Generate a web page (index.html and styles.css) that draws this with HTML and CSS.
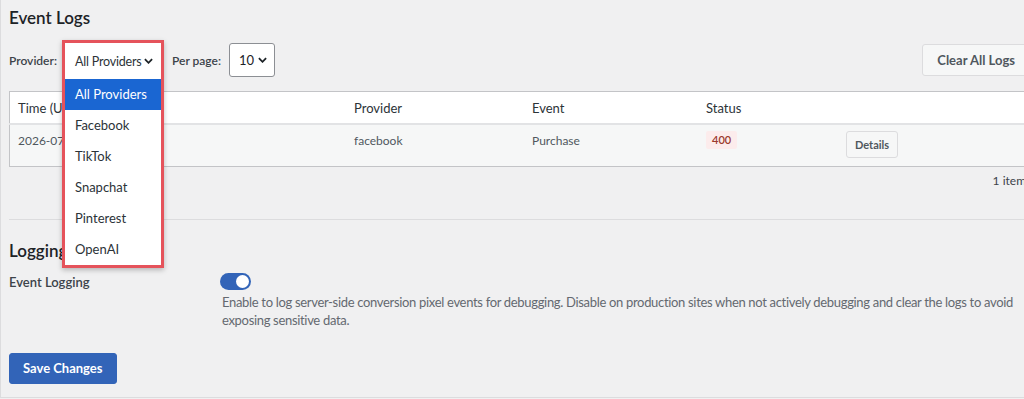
FILE: index.html
```html
<!DOCTYPE html>
<html lang="en">
<head>
  <meta charset="UTF-8">
  <title>Event Logs</title>
  <link rel="stylesheet" href="styles.css">
</head>
<body>
  <div class="panel">
    <h2 class="title">Event Logs</h2>

    <div class="filters">
      <span class="label">Provider:</span>
      <div class="provider">
        <!-- open select, outlined in red -->
        <div class="menu">
          <div class="menu-face">
            <span>All Providers</span>
            <svg class="chev" viewBox="0 0 10 6"><path d="M1 1l4 4 4-4"/></svg>
          </div>
          <ul class="menu-list">
            <li class="selected">All Providers</li>
            <li>Facebook</li>
            <li>TikTok</li>
            <li>Snapchat</li>
            <li>Pinterest</li>
            <li>OpenAI</li>
          </ul>
        </div>
      </div>

      <span class="label">Per page:</span>
      <div class="perpage">
        <span>10</span>
        <svg class="chev" viewBox="0 0 10 6"><path d="M1 1l4 4 4-4"/></svg>
      </div>

      <button class="btn clear-btn">Clear All Logs</button>
    </div>

    <table class="logs">
      <thead>
        <tr>
          <th class="col-time">Time (UTC)</th>
          <th class="col-provider">Provider</th>
          <th class="col-event">Event</th>
          <th class="col-status">Status</th>
          <th></th>
        </tr>
      </thead>
      <tbody>
        <tr>
          <td>2026-07-14 09:32:18</td>
          <td>facebook</td>
          <td>Purchase</td>
          <td class="tight"><span class="badge">400</span></td>
          <td class="tight"><button class="btn small">Details</button></td>
        </tr>
      </tbody>
    </table>

    <div class="count">1 item</div>

    <hr class="divider">

    <h2 class="title logging">Logging</h2>

    <div class="form-row">
      <div class="form-label">Event Logging</div>
      <div class="form-field">
        <span class="toggle"><span class="knob"></span></span>
        <p class="desc">Enable to log server-side conversion pixel events for debugging. Disable on production sites when not actively debugging and clear the logs to avoid exposing sensitive data.</p>
      </div>
    </div>

    <button class="btn primary">Save Changes</button>
  </div>
</body>
</html>
```

FILE: styles.css
```css
:root {
  --text-color: #1d2327;
  --muted: #50575e;
  --border: #dcdcde;
  --blue: #3264b8;
  --highlight: #e5535b;
}

body {
  margin: 0;
  font-family: Lato, 'Noto Sans', sans-serif;
  color: var(--text-color);
  background-color: #f0f0f1;
  overflow: hidden;
}

.panel {
  width: 1021px;
  padding: 6px 10px 13px 8px;
  border-left: 1px solid var(--border);
  border-bottom: 1px solid var(--border);
}

.title {
  margin: 0;
  font-size: 17px;
  font-weight: 600;
  line-height: 24px;
}

.filters {
  display: flex;
  align-items: center;
  height: 34px;
  margin-top: 13px;
}

.label {
  font-size: 12px;
  font-weight: 600;
  color: #3c434a;
  margin-right: 8px;
}

.provider {
  position: relative;
  width: 96px;
  height: 34px;
  margin-right: 11px;
}

.menu {
  position: absolute;
  top: -3px;
  left: -3px;
  width: 96px;
  border: 3px solid var(--highlight);
  background-color: #fff;
  box-shadow: 0 2px 5px rgba(0, 0, 0, 0.25);
  z-index: 2;
}

.menu-face {
  display: flex;
  align-items: center;
  justify-content: space-between;
  height: 36px;
  padding: 0 8px 0 10px;
  font-size: 12.5px;
  letter-spacing: -0.2px;
  white-space: nowrap;
  color: #2c3338;
}

.chev {
  flex-shrink: 0;
  width: 9px;
  height: 6px;
  fill: none;
  stroke: #1d2327;
  stroke-width: 2;
}

.menu-list {
  list-style: none;
  margin: 0;
  padding: 0;
}

.menu-list li {
  height: 31px;
  line-height: 31px;
  padding-left: 10px;
  font-size: 13px;
  color: #2c3338;
}

.menu-list li.selected {
  background-color: #1a66d2;
  color: #fff;
}

.perpage {
  display: flex;
  align-items: center;
  gap: 4px;
  box-sizing: border-box;
  height: 34px;
  padding: 0 7px 0 9px;
  border: 1px solid #8c8f94;
  border-radius: 3px;
  background-color: #fff;
  font-size: 13px;
}

.btn {
  font-family: inherit;
  font-weight: 700;
  border-radius: 3px;
  cursor: pointer;
}

.clear-btn {
  margin-left: auto;
  height: 32px;
  padding: 0 14px;
  border: 1px solid var(--border);
  background-color: #f6f7f7;
  color: var(--muted);
  font-size: 13px;
}

.logs {
  width: 100%;
  margin-top: 14px;
  border: 1px solid #c3c4c7;
  border-collapse: collapse;
  background-color: #fff;
}

.logs th {
  height: 31px;
  padding: 0 8px;
  text-align: left;
  font-size: 13px;
  font-weight: 400;
  color: #2c3338;
  border-bottom: 2px solid #e2e3e5;
}

.col-time { width: 320px; }
.col-provider { width: 162px; }
.col-event { width: 158px; }
.col-status { width: 124px; }

.logs td {
  height: 42px;
  box-sizing: border-box;
  padding: 8px 8px 0;
  vertical-align: top;
  background-color: #f6f7f7;
  font-size: 12px;
  line-height: 16px;
  color: var(--muted);
}

.logs td.tight {
  padding-top: 6px;
}

.badge {
  display: inline-block;
  padding: 0 6px;
  line-height: 18px;
  font-size: 11px;
  font-weight: 600;
  color: #9b3a2c;
  background-color: #fcecec;
  border-radius: 2px;
}

.btn.small {
  height: 27px;
  padding: 0 8px;
  border: 1px solid var(--border);
  background-color: #f6f7f7;
  color: var(--muted);
  font-size: 11px;
}

.count {
  margin-top: 6px;
  text-align: right;
  padding-right: 4px;
  font-size: 12px;
  line-height: 16px;
  color: #3c434a;
}

.divider {
  margin: 30px 0 0;
  border: 0;
  border-top: 1px solid var(--border);
}

.title.logging {
  margin-top: 19px;
}

.form-row {
  display: flex;
  margin-top: 10px;
}

.form-label {
  width: 211px;
  flex-shrink: 0;
  font-size: 13px;
  font-weight: 600;
  line-height: 18px;
  color: #3c434a;
}

.form-field {
  flex: 1;
}

.toggle {
  display: flex;
  justify-content: flex-end;
  align-items: center;
  box-sizing: border-box;
  width: 31px;
  height: 17px;
  padding: 0 2px;
  border-radius: 9px;
  background-color: var(--blue);
}

.knob {
  width: 13px;
  height: 13px;
  border-radius: 50%;
  background-color: #fff;
}

.desc {
  width: 800px;
  margin: 3px 0 0 2px;
  font-size: 13px;
  line-height: 18px;
  letter-spacing: -0.32px;
  color: #646970;
}

.btn.primary {
  margin-top: 24px;
  height: 31px;
  padding: 0 13px;
  border: 1px solid var(--blue);
  background-color: var(--blue);
  color: #fff;
  font-size: 13px;
}
```
